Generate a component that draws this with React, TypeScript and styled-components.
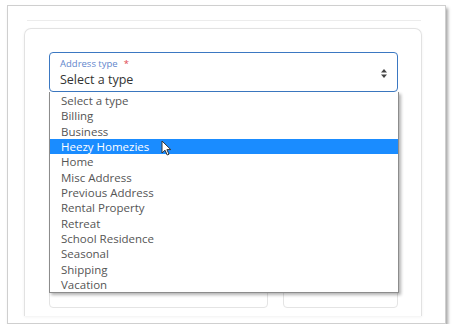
import React from "react";
import styled, { createGlobalStyle } from "styled-components";

const GlobalStyle = createGlobalStyle`
  html, body {
    margin: 0;
    padding: 0;
    background: #ffffff;
  }
  body {
    font-family: "Open Sans", "Noto Sans", sans-serif;
  }
`;

const Frame = styled.div`
  box-sizing: border-box;
  margin: 5px 0 0 7px;
  width: 439px;
  height: 319px;
  border: 1px solid #cfcfcf;
  box-shadow: 2px 3px 3px rgba(0, 0, 0, 0.35);
  background: #fff;
  padding-top: 14px;
  overflow: hidden;
`;

const Rule = styled.div`
  height: 1px;
  margin: 0 24px 0 19px;
  background: #ececec;
`;

const Card = styled.div`
  box-sizing: border-box;
  margin: 7px 0 0 16px;
  width: 398px;
  height: 288px;
  border: 1px solid #e2e2e2;
  border-bottom: none;
  border-radius: 7px 7px 0 0;
  box-shadow: 0 1px 3px rgba(0, 0, 0, 0.06);
  padding: 23px 23px 0 24px;
  display: flex;
  flex-direction: column;
  gap: 14px;
`;

const FieldWrap = styled.div`
  position: relative;
  z-index: 2;
`;

const Field = styled.div`
  box-sizing: border-box;
  height: 40px;
  border: 1.5px solid #3b78c2;
  border-radius: 4px;
  padding: 3px 10px 0 10px;
  display: flex;
  align-items: center;
  justify-content: space-between;
`;

const FieldText = styled.div`
  display: flex;
  flex-direction: column;
`;

const Label = styled.span`
  font-size: 9.5px;
  line-height: 12px;
  color: #5f86cc;
`;

const Required = styled.span`
  color: #e0484f;
  margin-left: 6px;
`;

const Value = styled.span`
  font-size: 12.5px;
  line-height: 19px;
  color: #333;
`;

const Dropdown = styled.ul`
  position: absolute;
  top: 100%;
  left: 0;
  width: calc(100% + 1px);
  box-sizing: border-box;
  margin: 0;
  padding: 1px 0 0;
  list-style: none;
  background: #fff;
  border: 1px solid #8c8c8c;
  border-top: none;
  box-shadow: 2px 2px 3px rgba(0, 0, 0, 0.3);
`;

const Option = styled.li<{ $active?: boolean }>`
  height: 15.33px;
  line-height: 15.33px;
  padding-left: 11px;
  font-size: 11.5px;
  color: ${(p) => (p.$active ? "#ffffff" : "#555")};
  background: ${(p) => (p.$active ? "#1a8cff" : "transparent")};
  white-space: nowrap;
`;

const Cursor = styled.svg`
  position: absolute;
  left: 112px;
  top: 88px;
  z-index: 3;
`;

const Row = styled.div<{ $cols: string }>`
  display: grid;
  grid-template-columns: ${(p) => p.$cols};
  gap: 15px;
`;

const Box = styled.div`
  box-sizing: border-box;
  height: 40px;
  border: 1px solid #e4e4e4;
  border-radius: 4px;
`;

const options = [
  "Select a type",
  "Billing",
  "Business",
  "Heezy Homezies",
  "Home",
  "Misc Address",
  "Previous Address",
  "Rental Property",
  "Retreat",
  "School Residence",
  "Seasonal",
  "Shipping",
  "Vacation",
];

const SelectArrows = () => (
  <svg width="6" height="9" viewBox="0 0 6 9">
    <path d="M3 0 L6 3.5 L0 3.5 Z" fill="#444" />
    <path d="M3 9 L6 5.5 L0 5.5 Z" fill="#444" />
  </svg>
);

const App: React.FC = () => {
  return (
    <>
      <GlobalStyle />
      <Frame>
        <Rule />
        <Card>
          <FieldWrap>
            <Field>
              <FieldText>
                <Label>
                  Address type<Required>*</Required>
                </Label>
                <Value>Select a type</Value>
              </FieldText>
              <SelectArrows />
            </Field>
            <Dropdown>
              {options.map((o) => (
                <Option key={o} $active={o === "Heezy Homezies"}>
                  {o}
                </Option>
              ))}
            </Dropdown>
            <Cursor width="11" height="16" viewBox="0 0 11 16">
              <path
                d="M1 1 L1 13 L4 10.2 L6.2 15 L8 14.2 L5.9 9.6 L9.8 9.6 Z"
                fill="#fff"
                stroke="#333"
                strokeWidth="1"
                strokeLinejoin="round"
              />
            </Cursor>
          </FieldWrap>
          <Box />
          <Box />
          <Box />
          <Row $cols="219px 115px">
            <Box />
            <Box />
          </Row>
        </Card>
      </Frame>
    </>
  );
};

export default App;
